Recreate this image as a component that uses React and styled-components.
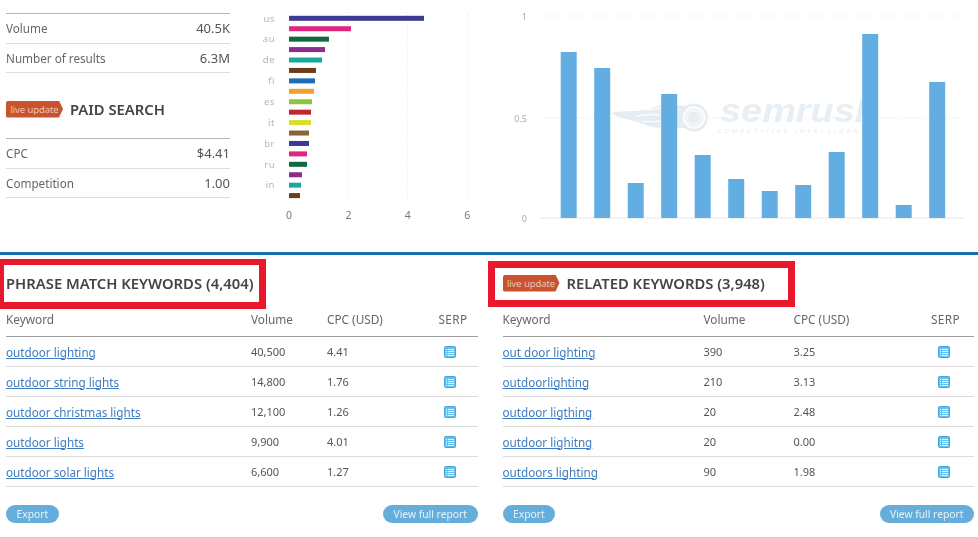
import React from 'react';
import styled, { createGlobalStyle } from 'styled-components';

const GlobalStyle = createGlobalStyle`
  html, body {
    margin: 0;
    background: #fff;
    overflow: hidden;
  }
  body {
    font-family: 'Noto Sans', 'Open Sans', sans-serif;
    color: #555;
  }
`;

const Page = styled.div`
  width: 978px;
  height: 537px;
  overflow: hidden;
  filter: blur(0.35px);
`;

const TopSection = styled.section`
  display: flex;
  height: 252px;
  padding-left: 6px;
  border-bottom: 3px solid #1671ad;
`;

const Metrics = styled.div`
  width: 224px;
  flex-shrink: 0;
  padding-top: 13px;
`;

const MetricList = styled.dl`
  margin: 0;
  border-top: 1px solid #b5b5b5;
`;

const MetricRow = styled.div`
  display: flex;
  justify-content: space-between;
  align-items: center;
  height: 28.5px;
  font-size: 11.7px;
  border-bottom: 1px solid #ddd;
`;

const MetricLabel = styled.dt`
  color: #666;
`;

const MetricValue = styled.dd`
  margin: 0;
  font-size: 13px;
  color: #555;
`;

const PaidHeading = styled.div`
  display: flex;
  align-items: center;
  gap: 7px;
  height: 58px;
  padding-top: 7px;
`;

const Badge = styled.span`
  display: inline-flex;
  align-items: center;
  justify-content: center;
  width: 57px;
  height: 17px;
  flex-shrink: 0;
  font-size: 9.5px;
  color: #efc6b6;
  background: #c9532f;
  border-radius: 2px 0 0 2px;
  clip-path: polygon(0 0, 93% 0, 100% 50%, 93% 100%, 0 100%);
  letter-spacing: -0.1px;
`;

const Title = styled.h2`
  margin: 0;
  font-size: 14.8px;
  font-weight: 600;
  color: #444;
  white-space: nowrap;
`;

const BarSvg = styled.svg`
  display: block;
  flex-shrink: 0;
  width: 280px;
  height: 240px;
`;

const ColumnSvg = styled.svg`
  display: block;
  flex-shrink: 0;
  width: 468px;
  height: 240px;
`;

const BottomSection = styled.section`
  display: flex;
  gap: 25px;
  padding: 0 4px 0 6px;
`;

const Panel = styled.div`
  flex: 1;
  min-width: 0;
`;

const PanelHeading = styled.div`
  position: relative;
  display: flex;
  align-items: center;
  gap: 7px;
  height: 38px;
  margin-top: 9px;
`;

const Highlight = styled.span`
  position: absolute;
  border: solid #e8192c;
  border-width: ${p => p.$border};
  top: ${p => p.$top}px;
  bottom: ${p => p.$bottom}px;
  left: ${p => p.$left}px;
  width: ${p => p.$width}px;
`;

const Row = styled.div`
  display: grid;
  grid-template-columns: ${p => p.$columns};
  align-items: center;
  height: ${p => (p.$head ? 35 : 30)}px;
  box-sizing: border-box;
  border-bottom: 1px solid ${p => (p.$head ? '#9c9c9c' : '#dcdcdc')};
  font-size: ${p => (p.$head ? 11.8 : 11)}px;
  color: ${p => (p.$head ? '#666' : '#555')};
`;

const KeywordLink = styled.a`
  font-size: 11.7px;
  color: #3f7cc0;
  text-decoration: underline;
`;

const SerpCell = styled.span`
  display: flex;
  justify-content: flex-end;
  padding-right: ${p => p.$pad}px;
`;

const SerpHead = styled.span`
  text-align: right;
  padding-right: ${p => p.$pad}px;
  letter-spacing: 0.4px;
`;

const Footer = styled.div`
  display: flex;
  justify-content: space-between;
  margin-top: 18px;
`;

const PillButton = styled.button`
  height: 18px;
  padding: 0 10.5px;
  border: 0;
  border-radius: 9px;
  background: #65aedb;
  color: #e6f2f9;
  font-family: inherit;
  font-size: 10.3px;
  line-height: 18px;
`;

const barColors = ['#3d3a96', '#e0267f', '#0f6a3f', '#8a2e8e', '#1ba8a0', '#6b3b1c', '#1b6fb6', '#f0a034', '#8cc63f', '#c0282e', '#d8df2a', '#8c6239'];
const barWidths = [135, 62, 40, 36, 33, 27, 26, 25, 23, 22, 22, 20, 20, 18, 18, 13, 12, 11];
const barLabels = ['us', 'au', 'de', 'fi', 'es', 'it', 'br', 'ru', 'in'];

const BarChart = () => (
  <BarSvg viewBox="230 0 280 240" aria-label="Volume by country">
    {[348, 407.5, 467.5].map(x => (
      <line key={x} x1={x} x2={x} y1="12" y2="200" stroke="#e4e6ee" strokeDasharray="1 2" />
    ))}
    {barWidths.map((w, i) => (
      <rect key={i} x="289" y={15.8 + i * 10.43} width={w} height="5" fill={barColors[i % barColors.length]} />
    ))}
    {barLabels.map((label, i) => (
      <text key={label} x="275" y={21.5 + i * 20.86} textAnchor="end" fontSize="9.5" fill="#b5b5b5" letterSpacing="0.5">
        {label}
      </text>
    ))}
    {[0, 2, 4, 6].map((v, i) => (
      <text key={v} x={289 + i * 59.4} y="219" textAnchor="middle" fontSize="10.5" fill="#777">
        {v}
      </text>
    ))}
  </BarSvg>
);

const columnTops = [52, 68, 183, 94, 155, 179, 191, 185, 152, 34, 205, 82];

const Watermark = () => (
  <g>
    <path
      d="M611 113c13-3 24-1 34-3 7-1 13-5 19-6l24 2v22l-28 0c-10 0-20-6-30-8-8-2-14-3-19-7z"
      fill="#e6edf2"
    />
    <path d="M636 116c9-1 17-2 24-1M642 121c7 1 13 1 20 0M646 110c5 0 10-1 16-3" stroke="#fff" strokeWidth="1.2" fill="none" />
    <circle cx="694" cy="117.5" r="14" fill="#e6edf2" />
    <circle cx="694" cy="117.5" r="10.5" fill="#f1f5f8" stroke="#fff" strokeWidth="1.5" />
    <circle cx="694" cy="117.5" r="6" fill="#e8eef3" />
    <text
      x="720"
      y="122"
      fontSize="34"
      fontWeight="700"
      fontStyle="italic"
      fill="#e7eff5"
      textLength="158"
      lengthAdjust="spacingAndGlyphs"
      fontFamily="'Liberation Sans', sans-serif"
    >
      semrush
    </text>
    <text
      x="717"
      y="132.5"
      fontSize="6"
      fontWeight="700"
      fontStyle="italic"
      fill="#e9f0f5"
      letterSpacing="3"
      fontFamily="'Liberation Sans', sans-serif"
    >
      COMPETITIVE INTELLIGENCE
    </text>
  </g>
);

const ColumnChart = () => (
  <ColumnSvg viewBox="510 0 468 240" aria-label="Trend">
    {[16, 118, 218].map(y => (
      <line key={y} x1="541" x2="964" y1={y} y2={y} stroke="#e6e6e6" strokeDasharray={y === 218 ? undefined : '1 2'} />
    ))}
    <text x="527" y="20" textAnchor="end" fontSize="9" fill="#aaa">1</text>
    <text x="527" y="122" textAnchor="end" fontSize="9" fill="#aaa">0.5</text>
    <text x="527" y="222" textAnchor="end" fontSize="9" fill="#aaa">0</text>
    <Watermark />
    {columnTops.map((top, i) => (
      <rect key={i} x={560.7 + i * 33.5} y={top} width="16" height={218 - top} fill="#62aee2" />
    ))}
  </ColumnSvg>
);

const SerpIcon = () => (
  <svg width="12" height="12" viewBox="0 0 12 12" aria-hidden="true">
    <rect x="0.5" y="0.5" width="11" height="11" rx="1" fill="#66c0ea" stroke="#4aa3d8" />
    <path d="M2 3.5h1M4 3.5h6M2 5.5h1M4 5.5h6M2 7.5h1M4 7.5h6M2 9.5h1M4 9.5h6" stroke="#e4f5fc" strokeWidth="1" fill="none" />
  </svg>
);

const phraseRows = [
  ['outdoor lighting', '40,500', '4.41'],
  ['outdoor string lights', '14,800', '1.76'],
  ['outdoor christmas lights', '12,100', '1.26'],
  ['outdoor lights', '9,900', '4.01'],
  ['outdoor solar lights', '6,600', '1.27'],
];

const relatedRows = [
  ['out door lighting', '390', '3.25'],
  ['outdoorlighting', '210', '3.13'],
  ['outdoor ligthing', '20', '2.48'],
  ['outdoor lighitng', '20', '0.00'],
  ['outdoors lighting', '90', '1.98'],
];

const KeywordPanel = ({ rows, columns, iconPad, headPad, highlight, live, title }) => (
  <Panel>
    <PanelHeading>
      <Highlight {...highlight} />
      {live && <Badge>live update</Badge>}
      <Title>{title}</Title>
    </PanelHeading>
    <Row $head $columns={columns}>
      <span>Keyword</span>
      <span>Volume</span>
      <span>CPC (USD)</span>
      <SerpHead $pad={headPad}>SERP</SerpHead>
    </Row>
    {rows.map(([keyword, volume, cpc]) => (
      <Row key={keyword} $columns={columns}>
        <KeywordLink href="#">{keyword}</KeywordLink>
        <span>{volume}</span>
        <span>{cpc}</span>
        <SerpCell $pad={iconPad}>
          <SerpIcon />
        </SerpCell>
      </Row>
    ))}
    <Footer>
      <PillButton>Export</PillButton>
      <PillButton>View full report</PillButton>
    </Footer>
  </Panel>
);

const App = () => (
  <Page>
    <GlobalStyle />
    <TopSection>
      <Metrics>
        <MetricList>
          <MetricRow>
            <MetricLabel>Volume</MetricLabel>
            <MetricValue>40.5K</MetricValue>
          </MetricRow>
          <MetricRow>
            <MetricLabel>Number of results</MetricLabel>
            <MetricValue>6.3M</MetricValue>
          </MetricRow>
        </MetricList>
        <PaidHeading>
          <Badge>live update</Badge>
          <Title>PAID SEARCH</Title>
        </PaidHeading>
        <MetricList>
          <MetricRow>
            <MetricLabel>CPC</MetricLabel>
            <MetricValue>$4.41</MetricValue>
          </MetricRow>
          <MetricRow>
            <MetricLabel>Competition</MetricLabel>
            <MetricValue>1.00</MetricValue>
          </MetricRow>
        </MetricList>
      </Metrics>
      <BarChart />
      <ColumnChart />
    </TopSection>
    <BottomSection>
      <KeywordPanel
        title="PHRASE MATCH KEYWORDS (4,404)"
        rows={phraseRows}
        columns="245px 76px 1fr 50px"
        iconPad={22}
        headPad={10}
        highlight={{ $border: '6px 7px 7px 4px', $top: -5, $bottom: -7, $left: -6, $width: 255 }}
      />
      <KeywordPanel
        live
        title="RELATED KEYWORDS (3,948)"
        rows={relatedRows}
        columns="201px 90px 1fr 50px"
        iconPad={24}
        headPad={14}
        highlight={{ $border: '7px', $top: -3, $bottom: -5, $left: -15, $width: 293 }}
      />
    </BottomSection>
  </Page>
);

export default App;
